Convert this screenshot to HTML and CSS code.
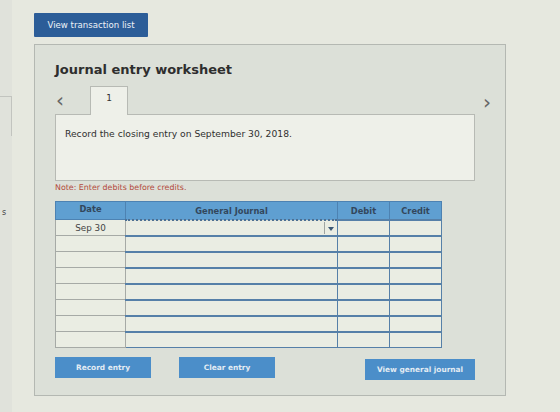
FILE: index.html
```html
<!DOCTYPE html>
<html lang="en">
<head>
    <meta charset="UTF-8">
    <meta name="viewport" content="width=device-width, initial-scale=1.0">
    <title>Journal entry worksheet</title>
    <link rel="stylesheet" href="styles.css">
</head>
<body>

    <!-- Edge of the question list -->
    <div class="side">
        <div class="side-box"></div>
        <span class="side-letter">s</span>
    </div>

    <div class="main">
        <button class="btn-dark">View transaction list</button>

        <div class="worksheet">
            <h1>Journal entry worksheet</h1>

            <div class="pager">
                <span class="arrow">&lsaquo;</span>
                <span class="tab">1</span>
                <span class="arrow arrow-right">&rsaquo;</span>
            </div>

            <div class="question">
                <p>Record the closing entry on September 30, 2018.</p>
            </div>

            <p class="note">Note: Enter debits before credits.</p>

            <table class="journal">
                <thead>
                    <tr>
                        <th class="col-date">Date</th>
                        <th class="col-account">General Journal</th>
                        <th class="col-amount">Debit</th>
                        <th class="col-amount">Credit</th>
                    </tr>
                </thead>
                <tbody>
                    <tr>
                        <td class="col-date">Sep 30</td>
                        <td class="col-account focused"><span class="caret"></span></td>
                        <td class="col-amount"></td>
                        <td class="col-amount"></td>
                    </tr>
                    <tr><td class="col-date"></td><td class="col-account"></td><td class="col-amount"></td><td class="col-amount"></td></tr>
                    <tr><td class="col-date"></td><td class="col-account"></td><td class="col-amount"></td><td class="col-amount"></td></tr>
                    <tr><td class="col-date"></td><td class="col-account"></td><td class="col-amount"></td><td class="col-amount"></td></tr>
                    <tr><td class="col-date"></td><td class="col-account"></td><td class="col-amount"></td><td class="col-amount"></td></tr>
                    <tr><td class="col-date"></td><td class="col-account"></td><td class="col-amount"></td><td class="col-amount"></td></tr>
                    <tr><td class="col-date"></td><td class="col-account"></td><td class="col-amount"></td><td class="col-amount"></td></tr>
                    <tr><td class="col-date"></td><td class="col-account"></td><td class="col-amount"></td><td class="col-amount"></td></tr>
                </tbody>
            </table>

            <div class="actions">
                <button class="btn-light">Record entry</button>
                <button class="btn-light">Clear entry</button>
                <button class="btn-light btn-wide">View general journal</button>
            </div>
        </div>
    </div>

</body>
</html>
```

FILE: styles.css
```css
* {
    box-sizing: border-box;
    margin: 0;
    padding: 0;
}

body {
    font-family: 'DejaVu Sans', Verdana, sans-serif;
    color: #333;
    background-color: #e6e8df;
    width: 560px;
    height: 412px;
    display: flex;
    overflow: hidden;
}

/* left strip */
.side {
    width: 12px;
    background-color: #e0e2db;
    padding-top: 96px;
    flex-shrink: 0;
}

.side-box {
    height: 40px;
    border-top: 1px solid #c2c4bf;
    border-right: 1px solid #c2c4bf;
}

.side-letter {
    display: block;
    margin-top: 72px;
    padding-left: 2px;
    font-size: 8px;
    color: #444;
}

.main {
    padding: 13px 0 0 22px;
}

button {
    font-family: inherit;
    border: none;
    color: #fff;
    cursor: pointer;
}

.btn-dark {
    width: 114px;
    height: 24px;
    background-color: #2c5d98;
    font-size: 8.6px;
    border-radius: 1px;
    color: #eef2f7;
}

.worksheet {
    width: 472px;
    height: 352px;
    margin-top: 7px;
    background-color: #dce0d8;
    border: 1px solid #b4b8b2;
    padding: 15px 0 0 20px;
}

h1 {
    font-size: 13px;
    font-weight: bold;
    color: #2e2e2e;
    line-height: 20px;
}

.pager {
    display: flex;
    align-items: flex-end;
    width: 436px;
    margin-top: 6px;
    height: 28px;
}

.arrow {
    font-size: 20px;
    line-height: 20px;
    color: #666;
    align-self: center;
    padding-left: 1px;
}

.arrow-right {
    margin-left: auto;
    margin-top: 4px;
}

.tab {
    width: 38px;
    height: 29px;
    margin-left: 26px;
    margin-bottom: -1px;
    background-color: #eef0e9;
    border: 1px solid #b7bab4;
    border-bottom: none;
    font-size: 9px;
    text-align: center;
    padding-top: 6px;
    position: relative;
    z-index: 1;
}

.question {
    width: 420px;
    height: 67px;
    background-color: #eef0e9;
    border: 1px solid #b7bab4;
    padding: 13px 9px;
}

.question p {
    font-size: 9.2px;
    color: #2f2f2f;
}

.note {
    font-size: 7.9px;
    color: #b34a3c;
    margin-top: 1px;
    line-height: 12px;
}

.journal {
    width: 387px;
    margin-top: 7px;
    border-collapse: collapse;
    font-size: 8.3px;
}

.journal th {
    height: 18px;
    background-color: #5f9fd1;
    color: #33475c;
    font-weight: bold;
    border: 1px solid #4d82b2;
    padding-top: 1px;
}

.journal th.col-date {
    vertical-align: top;
    padding-top: 2px;
}

.journal td {
    height: 16px;
    background-color: #eaede3;
    border: 1px solid #5680a8;
    border-width: 2px 1px 1px 1px;
    position: relative;
}

.journal td.col-date {
    border: 1px solid #a6aaa6;
    text-align: center;
    color: #444;
    font-size: 8.8px;
}

.col-date {
    width: 70px;
}

.col-amount {
    width: 52px;
}

.journal td.focused {
    border: 1px dotted #4d6f92;
    border-width: 2px 1px 2px 1px;
}

/* dropdown arrow inside the account cell */
.caret {
    position: absolute;
    right: 0;
    top: 1px;
    bottom: 1px;
    width: 13px;
    border-left: 1px solid #9fa5a2;
}

.caret::after {
    content: "";
    position: absolute;
    left: 3px;
    top: 5px;
    border-left: 3px solid transparent;
    border-right: 3px solid transparent;
    border-top: 4px solid #3b5875;
}

.actions {
    display: flex;
    margin-top: 9px;
    gap: 28px;
    width: 420px;
}

.btn-light {
    width: 96px;
    height: 21px;
    background-color: #4b8ec9;
    font-size: 7.4px;
    font-weight: bold;
    color: #e3ecf4;
}

.btn-wide {
    width: 110px;
    margin-left: auto;
    margin-top: 2px;
}
```
